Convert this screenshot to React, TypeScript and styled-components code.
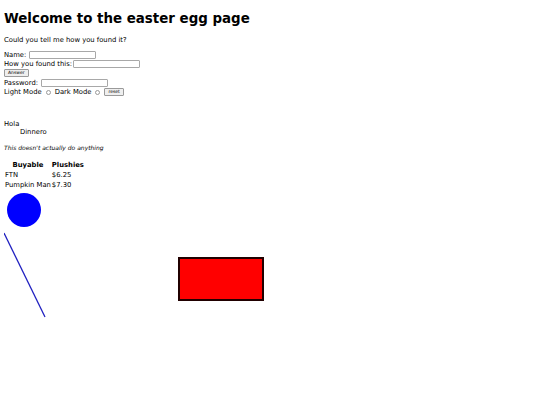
import { createGlobalStyle, styled } from 'styled-components';

const GlobalStyle = createGlobalStyle`
	html, body {
		margin: 0;
		background: #ffffff;
	}
	body {
		padding: 4px;
		font-family: 'DejaVu Sans', 'Liberation Sans', sans-serif;
		font-size: 6.8px;
		color: #000000;
	}
`;

const Title = styled.h1`
	margin: 7px 0 0;
	font-size: 13.4px;
	line-height: 16px;
	font-weight: bold;
`;

const Question = styled.p`
	margin: 8px 0 0;
	line-height: 10px;
`;

const Form = styled.form`
	display: flex;
	flex-direction: column;
	margin-top: 5px;
`;

const Row = styled.div`
	display: flex;
	align-items: center;
	height: 9.4px;
	gap: 1px;
`;

const Field = styled.input<{ $gap?: number }>`
	box-sizing: border-box;
	width: 67px;
	height: 8px;
	margin: 0 0 0 ${({ $gap = 2 }) => $gap}px;
	padding: 0;
	border: 1px solid #a8a8a8;
	border-radius: 1px;
	background: #ffffff;
`;

const Btn = styled.button`
	box-sizing: border-box;
	height: 8px;
	padding: 0 3px;
	border: 1px solid #9a9a9a;
	border-radius: 1px;
	background: #efefef;
	font-family: inherit;
	font-size: 4.5px;
	line-height: 6px;
	color: #000000;
`;

const Radio = styled.span`
	display: inline-block;
	box-sizing: border-box;
	width: 5px;
	height: 5px;
	margin: 0 3px 0 3px;
	border: 1px solid #9a9a9a;
	border-radius: 50%;
`;

const Greeting = styled.div`
	margin-top: 23px;
	line-height: 8px;
`;

const Indented = styled.div`
	padding-left: 16px;
`;

const Note = styled.p`
	margin: 8px 0 0;
	font-size: 6px;
	font-style: italic;
	line-height: 8px;
`;

const Table = styled.table`
	margin-top: 8px;
	border-collapse: separate;
	border-spacing: 1px;
	line-height: 9px;

	th {
		font-weight: bold;
		padding: 0;
		text-align: center;
	}

	td {
		padding: 0;
	}
`;

const Drawing = styled.svg`
	display: block;
	margin-top: 1px;
`;

export default function App() {
	return (
		<>
			<GlobalStyle />
			<Title>Welcome to the easter egg page</Title>
			<Question>Could you tell me how you found it?</Question>
			<Form>
				<Row>
					Name: <Field />
				</Row>
				<Row>
					How you found this:
					<Field $gap={0} />
				</Row>
				<Row>
					<Btn type="button">Answer</Btn>
				</Row>
				<Row>
					Password: <Field type="password" />
				</Row>
				<Row>
					Light Mode
					<Radio />
					Dark Mode
					<Radio />
					<Btn type="button">reset</Btn>
				</Row>
			</Form>
			<Greeting>
				<div>Hola</div>
				<Indented>Dinnero</Indented>
			</Greeting>
			<Note>This doesn't actually do anything</Note>
			<Table>
				<thead>
					<tr>
						<th>Buyable</th>
						<th>Plushies</th>
					</tr>
				</thead>
				<tbody>
					<tr>
						<td>FTN</td>
						<td>$6.25</td>
					</tr>
					<tr>
						<td>Pumpkin Man</td>
						<td>$7.30</td>
					</tr>
				</tbody>
			</Table>
			<Drawing width="270" height="130" viewBox="0 0 270 130">
				<circle cx="20" cy="18" r="17" fill="#0000ff" />
				<line x1="0" y1="41" x2="41" y2="125" stroke="#2020c0" strokeWidth="1.3" />
				<rect x="175" y="66" width="84" height="42" fill="#ff0000" stroke="#200000" strokeWidth="2" />
			</Drawing>
		</>
	);
}
